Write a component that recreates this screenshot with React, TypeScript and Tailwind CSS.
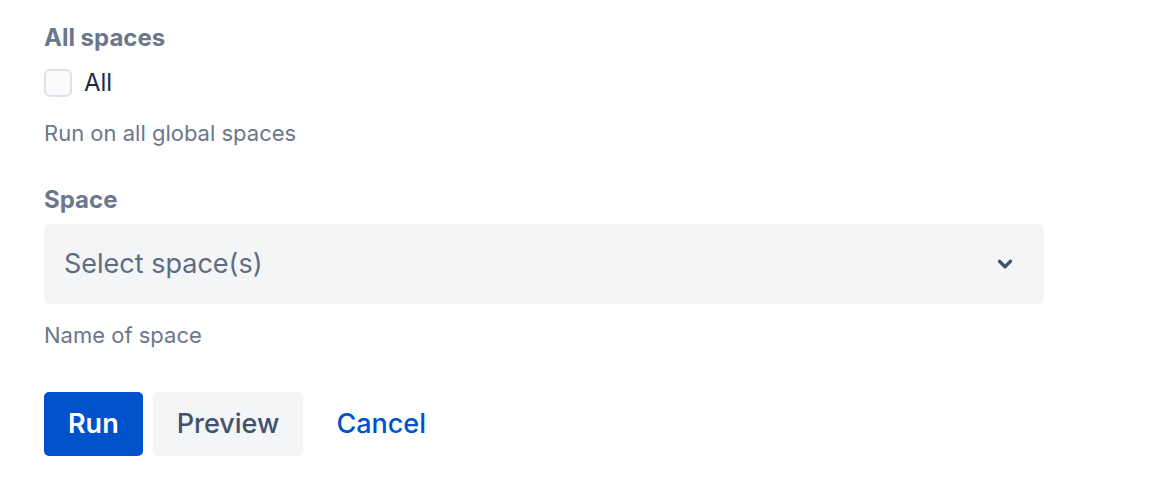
import { ChevronDown } from "lucide-react";

export default function App() {
  return (
    <div
      className="h-[500px] w-[1166px] bg-white px-[44px] pt-[24px]"
      style={{ fontFamily: "Inter, 'Noto Sans', sans-serif" }}
    >
      <div className="w-[1000px]">
        <div className="text-[24px] leading-[28px] font-bold text-[#6b778c]">All spaces</div>
        <label className="mt-[15px] flex h-[32px] items-center gap-[12px]">
          <span className="h-[28px] w-[28px] rounded-[6px] border-[2px] border-[#dfe1e6] bg-[#fafbfc]" />
          <span className="text-[24px] text-[#172b4d]">All</span>
        </label>
        <div className="mt-[20px] text-[22px] leading-[28px] text-[#6b778c]">Run on all global spaces</div>

        <div className="mt-[39px] text-[24px] leading-[28px] font-bold text-[#6b778c]">Space</div>
        <button className="mt-[10px] flex h-[80px] w-full items-center justify-between rounded-[6px] bg-[#f4f5f7] pl-[20px] pr-[28px] text-left">
          <span className="text-[27px] text-[#5e6c84]">Select space(s)</span>
          <ChevronDown className="h-[22px] w-[22px] text-[#42526e]" strokeWidth={3.5} />
        </button>
        <div className="mt-[17px] text-[22px] leading-[28px] text-[#6b778c]">Name of space</div>

        <div className="mt-[43px] flex items-center gap-[10px]">
          <button className="h-[64px] rounded-[5px] bg-[#0052cc] px-[24px] text-[27px] font-semibold text-white">
            Run
          </button>
          <button className="h-[64px] rounded-[5px] bg-[#f4f5f7] px-[24px] text-[27px] font-medium text-[#42526e]">
            Preview
          </button>
          <button className="h-[64px] rounded-[5px] px-[23px] text-[27px] font-medium text-[#0052cc]">
            Cancel
          </button>
        </div>
      </div>
    </div>
  );
}
